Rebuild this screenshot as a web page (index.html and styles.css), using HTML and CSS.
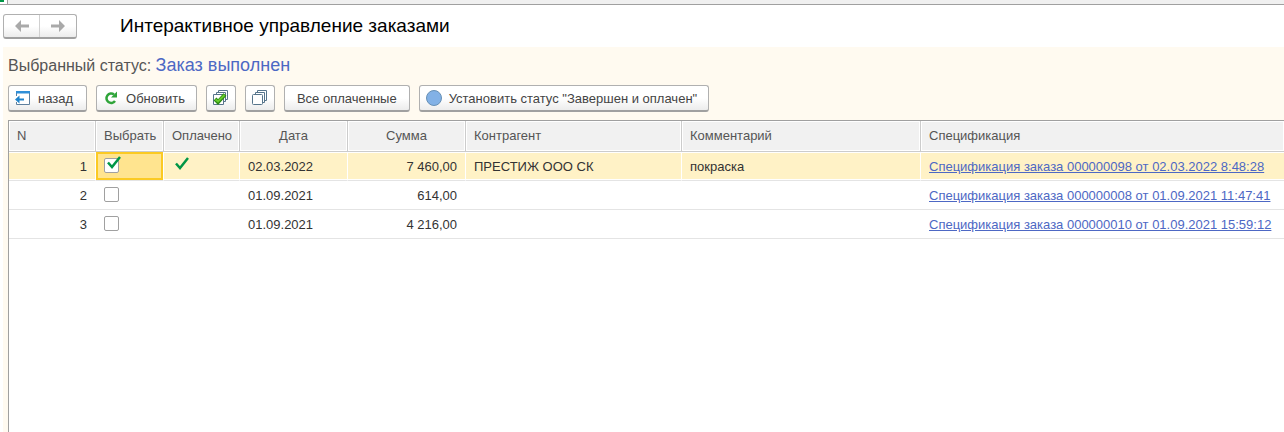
FILE: index.html
```html
<!DOCTYPE html>
<html lang="ru">
<head>
  <meta charset="UTF-8">
  <title>Интерактивное управление заказами</title>
  <meta name="viewport" content="width=device-width, initial-scale=1.0">
  <link rel="stylesheet" href="styles.css">
</head>
<body>
  <div class="tabs">
    <div class="tab-start"><span class="tab-mark"></span></div>
    <div class="tab-line"></div>
  </div>
  <header>
    <div class="history">
      <button type="button" aria-label="Назад">
        <svg width="14" height="12" viewBox="0 0 14 12"><path d="M0 6L6 0V4.5H14V7.5H6V12Z" fill="#a9a9a9"/></svg>
      </button>
      <button type="button" aria-label="Вперед">
        <svg width="14" height="12" viewBox="0 0 14 12"><path d="M14 6L8 0V4.5H0V7.5H8V12Z" fill="#a9a9a9"/></svg>
      </button>
    </div>
    <h1>Интерактивное управление заказами</h1>
  </header>
  <main>
    <div class="status">Выбранный статус: <a href="#">Заказ выполнен</a></div>
    <div class="toolbar">
      <button type="button" class="btn">
        <svg width="16" height="16" viewBox="0 0 16 16">
          <path d="M1.5 6V1.500H14.500V14.500H1.500V12" fill="#fff" stroke="#5f7f9d"/>
          <path d="M1 1H15V3.500H1Z" fill="#2f8fd8"/>
          <path d="M0 9.500L4.500 5.500V8.500H9V10.500H4.500V13.500Z" fill="#1f83cc"/>
        </svg>
        назад
      </button>
      <button type="button" class="btn refresh">
        <svg width="14" height="14" viewBox="0 0 14 14">
          <path d="M10 3.500A4.700 4.700 0 1 0 11 10" fill="none" stroke="#2fa43a" stroke-width="2.500"/>
          <path d="M7 6.500H13V0.500Z" fill="#2fa43a"/>
        </svg>
        Обновить
      </button>
      <button type="button" class="btn icon" aria-label="Отметить все">
        <svg width="16" height="16" viewBox="0 0 16 16" fill="#fff" stroke="#56748b">
          <path d="M5.5 0.5H14.5V9.5H5.5Z"/>
          <path d="M3.5 2.5H12.5V11.5H3.5Z"/>
          <path d="M0.5 4.5H10.5V14.5H0.5Z"/>
          <path d="M2 9L5 12L12 4.500" fill="none" stroke="#2c8a12" stroke-width="4"/>
          <path d="M2.500 9.500L5 11.500L11.500 5" fill="none" stroke="#65cc2b" stroke-width="2"/>
        </svg>
      </button>
      <button type="button" class="btn icon" aria-label="Снять отметки">
        <svg width="16" height="16" viewBox="0 0 16 16" fill="#fff" stroke="#56748b">
          <path d="M5.5 0.5H14.5V10.5H5.5Z"/>
          <path d="M3.5 2.5H12.5V12.5H3.5Z"/>
          <rect x="0.5" y="4.5" width="10" height="10" rx="1"/>
        </svg>
      </button>
      <button type="button" class="btn wide">Все оплаченные</button>
      <button type="button" class="btn set">
        <svg width="16" height="16" viewBox="0 0 16 16"><circle cx="8" cy="8" r="7.5" fill="#82b1e6" stroke="#6790b5"/></svg>
        Установить статус "Завершен и оплачен"
      </button>
    </div>
    <div class="grid">
      <table>
        <colgroup>
          <col class="c-num"><col class="c-pick"><col class="c-paid"><col class="c-date">
          <col class="c-sum"><col class="c-agent"><col class="c-note"><col>
        </colgroup>
        <thead>
          <tr>
            <th>N</th>
            <th>Выбрать</th>
            <th>Оплачено</th>
            <th class="center">Дата</th>
            <th class="center">Сумма</th>
            <th>Контрагент</th>
            <th>Комментарий</th>
            <th>Спецификация</th>
          </tr>
        </thead>
        <tbody>
          <tr class="current">
            <td class="num">1</td>
            <td class="active">
              <label class="check"><input type="checkbox" aria-label="Выбрать заказ 1" checked><svg width="14" height="13" viewBox="0 0 14 13"><path d="M1 6.5L5 11L13 1" fill="none" stroke="#009646" stroke-width="2.5"/></svg></label>
            </td>
            <td><svg class="paid" width="14" height="13" viewBox="0 0 14 13"><path d="M1 6.5L5 11L13 1" fill="none" stroke="#009646" stroke-width="2.5"/></svg></td>
            <td>02.03.2022</td>
            <td class="num">7 460,00</td>
            <td>ПРЕСТИЖ ООО СК</td>
            <td>покраска</td>
            <td><a href="#">Спецификация заказа 000000098 от 02.03.2022 8:48:28</a></td>
          </tr>
          <tr>
            <td class="num">2</td>
            <td>
              <label class="check"><input type="checkbox" aria-label="Выбрать заказ 2"><svg width="14" height="13" viewBox="0 0 14 13"><path d="M1 6.5L5 11L13 1" fill="none" stroke="#009646" stroke-width="2.5"/></svg></label>
            </td>
            <td></td>
            <td>01.09.2021</td>
            <td class="num">614,00</td>
            <td></td>
            <td></td>
            <td><a href="#">Спецификация заказа 000000008 от 01.09.2021 11:47:41</a></td>
          </tr>
          <tr>
            <td class="num">3</td>
            <td>
              <label class="check"><input type="checkbox" aria-label="Выбрать заказ 3"><svg width="14" height="13" viewBox="0 0 14 13"><path d="M1 6.5L5 11L13 1" fill="none" stroke="#009646" stroke-width="2.5"/></svg></label>
            </td>
            <td></td>
            <td>01.09.2021</td>
            <td class="num">4 216,00</td>
            <td></td>
            <td></td>
            <td><a href="#">Спецификация заказа 000000010 от 01.09.2021 15:59:12</a></td>
          </tr>
        </tbody>
      </table>
    </div>
  </main>
</body>
</html>
```
FILE: styles.css
```css
* {
  box-sizing: border-box;
}
body {
  margin: 0;
  min-height: 100vh;
  display: flex;
  flex-direction: column;
  background: #fff;
  color: #333;
  font-family: "Liberation Sans", Arial, sans-serif;
  font-size: 13px;
  overflow-x: hidden;
}
a {
  color: #4d68c4;
}
.tabs {
  display: flex;
  height: 5px;
  border-bottom: 1px solid #a0a0a0;
}
.tab-start {
  width: 8px;
  border-right: 1px solid #a0a0a0;
}
.tab-mark {
  display: block;
  width: 4px;
  height: 2px;
  background: #009646;
}
.tab-line {
  flex: 1;
  background: #f0f0f0;
}
header {
  display: flex;
  align-items: center;
  gap: 43px;
  height: 42px;
  padding-left: 3px;
}
.history {
  display: flex;
  height: 25px;
  border: 1px solid #b0b0b0;
  border-bottom: 2px solid #a0a0a0;
  border-radius: 3px;
  background: linear-gradient(#fff 50%, #ececec);
}
.history button {
  display: flex;
  align-items: center;
  justify-content: center;
  width: 36px;
  padding: 0;
  border: none;
  background: none;
}
.history button:first-child {
  border-right: 1px solid #d0d0d0;
}
h1 {
  margin: 0;
  color: #000;
  font-size: 19px;
  font-weight: normal;
}
main {
  flex: 1;
  display: flex;
  flex-direction: column;
  margin-left: 3px;
  padding-left: 5px;
  background: #fffaf0;
}
.status {
  height: 38px;
  line-height: 36px;
  font-size: 16px;
  color: #555;
}
.status a {
  font-size: 18px;
  text-decoration: none;
}
.toolbar {
  display: flex;
  gap: 9px;
  padding-bottom: 8px;
}
.btn {
  display: flex;
  align-items: center;
  gap: 7px;
  height: 27px;
  padding: 0 13px 0 6px;
  border: 1px solid #b0b0b0;
  border-bottom: 2px solid #a0a0a0;
  border-radius: 3px;
  background: linear-gradient(#fff 50%, #ececec);
  color: #444;
  font-family: inherit;
  font-size: 13px;
  white-space: nowrap;
}
.btn.refresh {
  gap: 8px;
  padding: 0 11px 0 7px;
}
.btn.set {
  padding-right: 11px;
}
.btn.icon {
  width: 30px;
  padding: 0 6px;
}
.btn.wide {
  padding: 0 12px;
}
.grid {
  flex: 1;
  border-top: 1px solid #a0a0a0;
  border-left: 1px solid #a0a0a0;
  background: #fff;
}
table {
  width: 100%;
  table-layout: fixed;
  border-collapse: separate;
  border-spacing: 0;
}
.c-num {
  width: 87px;
}
.c-pick {
  width: 68px;
}
.c-paid {
  width: 76px;
}
.c-date {
  width: 108px;
}
.c-sum {
  width: 118px;
}
.c-agent {
  width: 216px;
}
.c-note {
  width: 239px;
}
th {
  height: 31px;
  padding: 0 0 2px 8px;
  border-right: 1px solid #ccc;
  border-bottom: 1px solid #ccc;
  background: #f1f1f1;
  box-shadow: inset 0 0 0 1px #fff;
  color: #555;
  font-weight: normal;
  text-align: left;
  white-space: nowrap;
}
th.center {
  padding-left: 0;
  text-align: center;
}
td {
  height: 29px;
  padding: 0 8px;
  border-bottom: 1px solid #e4e4e4;
  white-space: nowrap;
}
th:last-child {
  border-right: none;
}
td.num {
  padding-right: 9px;
  text-align: right;
}
.current td {
  border-right: 1px solid #fff;
  background: #fff2c6;
  box-shadow: inset 0 1px #fff, inset 0 -1px #fff;
}
.current td.num {
  padding-right: 8px;
}
.current td:last-child {
  border-right: none;
}
.current td.active {
  background: #ffe48f;
  box-shadow: inset 0 0 0 2px #fbca23;
  background-clip: padding-box;
}
.check {
  display: block;
  position: relative;
  width: 15px;
  height: 15px;
  margin-bottom: 2px;
}
.check input {
  appearance: none;
  display: block;
  width: 15px;
  height: 15px;
  margin: 0;
  border: 1px solid #a0a0a0;
  border-radius: 2px;
  background: #fff;
}
.check svg {
  display: none;
  position: absolute;
  left: 3px;
  top: -2px;
}
.check input:checked + svg {
  display: block;
}
.paid {
  display: block;
  margin: 0 0 6px 3px;
}
```
